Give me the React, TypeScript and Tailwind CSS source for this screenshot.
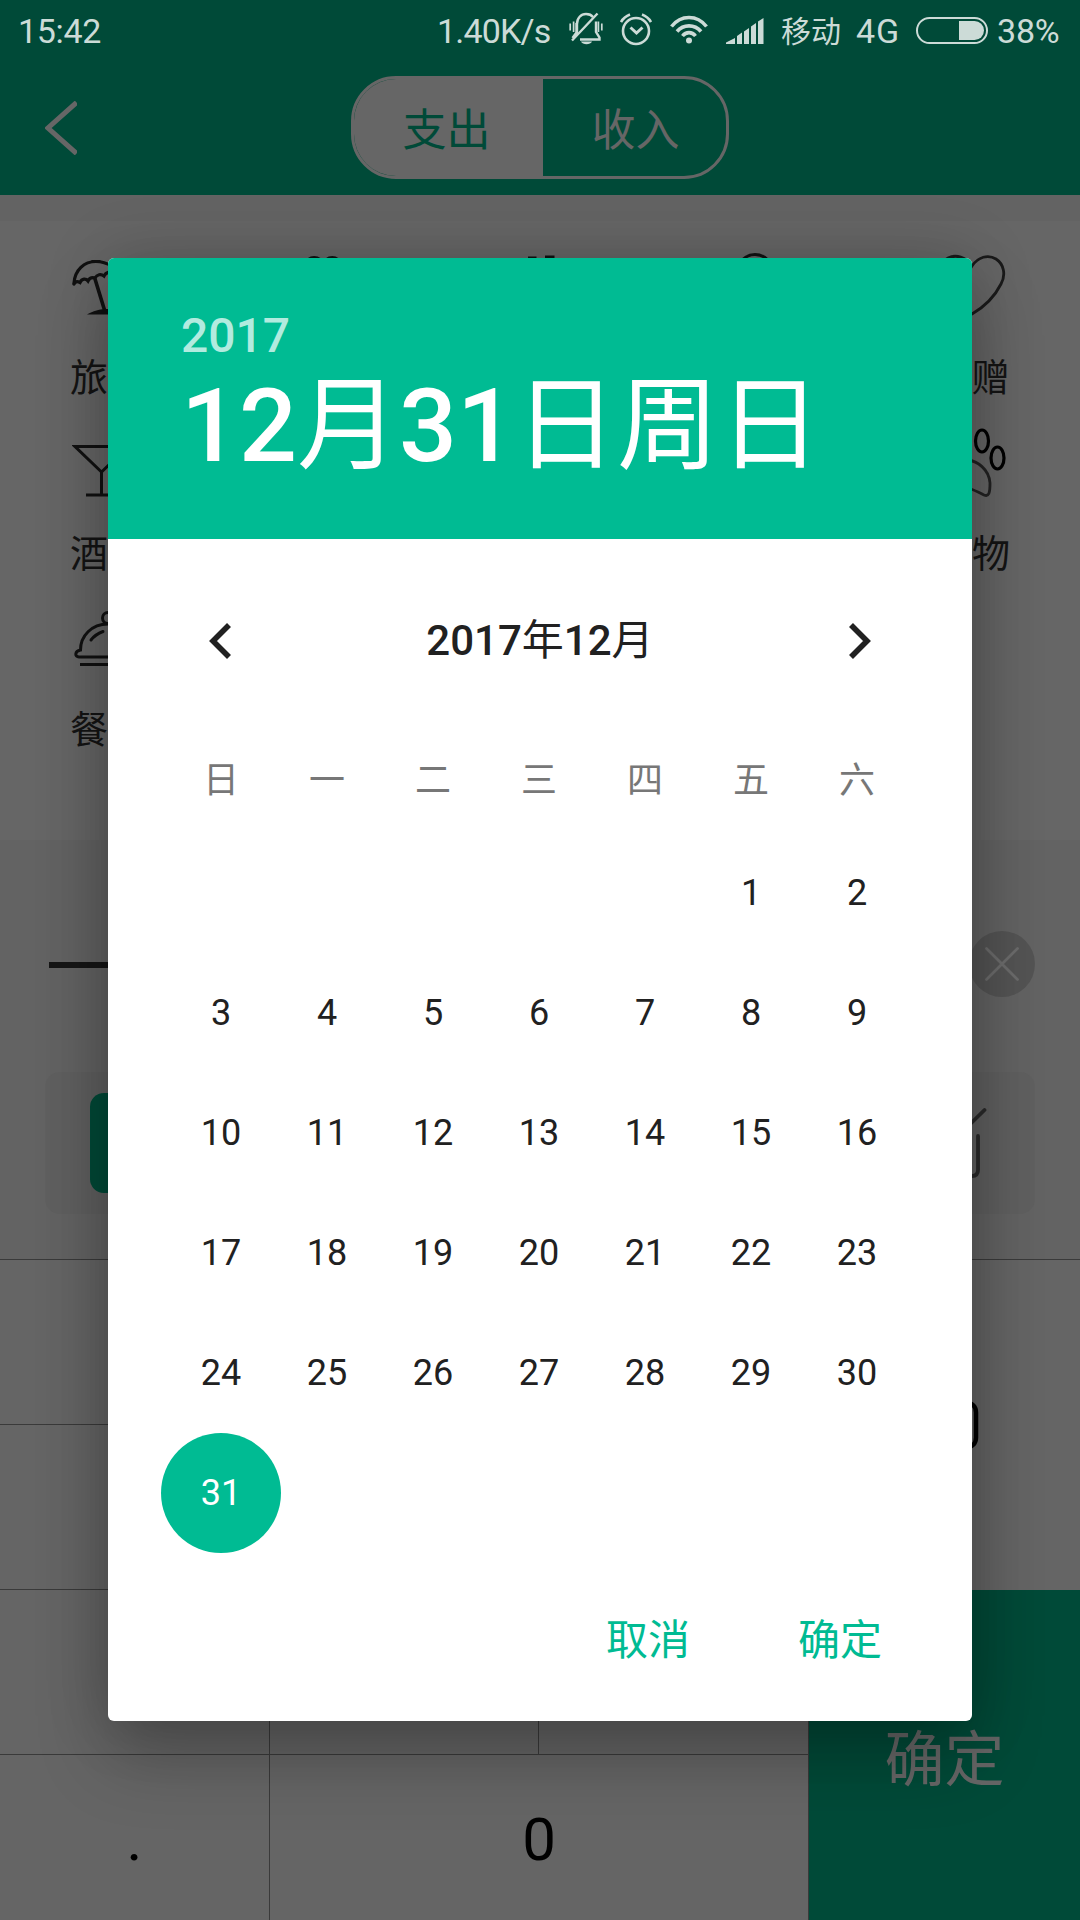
import React from 'react';

const WEEKDAYS = ['日', '一', '二', '三', '四', '五', '六'];
const LEADING_BLANKS = 5;
const DAYS = Array.from({ length: 31 }, (_, i) => i + 1);
const SELECTED = 31;

function StatusBar() {
  return (
    <div className="flex h-[62px] items-center pl-[18px] text-[34px] leading-none text-[#ccdbd7]">
      <span className="w-[419px] tracking-[-0.3px]">15:42</span>
      <span className="w-[132px] tracking-[-0.8px]">1.40K/s</span>
      <svg width="34" height="34" viewBox="0 0 34 34" fill="none" stroke="#ccdbd7" strokeWidth="2.4" className="mr-[17px] -mt-1">
        <path d="M8 23V12C8 6 12 2 17 2c3 0 5.500 1 7 3M27 9.500V20l3.500 5.500v2H11" />
        <path d="M7.500 11v9.500L3.500 26M3 28.500 28.500 1.500" />
        <path d="M1.200 11.500v7M4.600 9.500v10.500M29.400 9.500v10.500M32.800 11.500v7" strokeWidth="1.700" />
        <path d="M12 29.500h11c-1.500 3.500-9.500 3.500-11 0z" fill="#ccdbd7" stroke="none" />
      </svg>
      <svg width="32" height="34" viewBox="0 0 32 34" fill="none" stroke="#ccdbd7" strokeWidth="2.600" className="mr-[18px] -mt-1">
        <circle cx="16" cy="19" r="13" />
        <path d="M1 10C3 6.500 6 4 10 2.500M31 10C29 6.500 26 4 22 2.500" />
        <path d="m10.500 15.500 6 5.500 6-5.500" strokeWidth="3" />
      </svg>
      <svg width="38" height="30" viewBox="0 0 38 30" fill="none" stroke="#ccdbd7" strokeWidth="3.600" className="mr-[18px] -mt-[3px]">
        <path d="M1.500 11.500C11-.5 27-.5 36.500 11.500" />
        <path d="M7 16.500c6.500-7.500 17.500-7.500 24 0" />
        <path d="M12.500 21c3.500-4.500 9.500-4.500 13 0" />
        <circle cx="19" cy="25.500" r="3" fill="#ccdbd7" stroke="none" />
      </svg>
      <svg width="38" height="26" viewBox="0 0 38 26" fill="#ccdbd7" className="mr-[17px]">
        <path d="M0 26v-1.500L9 20v6zM11 26V18l5-3.500V26zM18 26V13.500l5-3.500V26zM25 26V8.500l5-3.500V26zM32 26V3.500L37.500 0v26z" />
      </svg>
      <span className="w-[74px] pt-[2px] text-[30px]">移动</span>
      <span className="w-[61px] pl-px tracking-[1px]">4G</span>
      <div className="flex h-[27px] w-[72px] shrink-0 -translate-y-px justify-end rounded-full border-2 border-[#ccdbd7] p-[2px]">
        <div className="w-[25px] rounded-r-full bg-[#ccdbd7]" />
      </div>
      <span className="ml-[9px] tracking-[-0.2px]">38%</span>
    </div>
  );
}

function Header() {
  return (
    <header className="h-[195px] bg-[#004a38]">
      <StatusBar />
      <div className="flex items-start pt-[14px]">
        <svg width="32" height="54" viewBox="0 0 32 54" fill="none" stroke="#666666" strokeWidth="5" className="ml-[45px] mt-[25px]">
          <path d="M31.500 1.500 3 27l28.500 25.500" />
        </svg>
        <div className="ml-[274px] flex h-[103px] w-[378px] overflow-hidden rounded-[45px] border-[3px] border-[#666666] text-[44px]">
          <div className="flex w-[189px] items-center justify-center bg-[#666666] pr-[4px] pt-[6px] text-[#004a38]">支出</div>
          <div className="flex flex-1 items-center justify-center pl-[2px] pt-[6px] text-[#666666]">收入</div>
        </div>
      </div>
    </header>
  );
}

function Categories() {
  return (
    <section className="flex h-[619px] flex-col bg-[#666666] pt-[24px] text-[38px] leading-[48px] text-[#141414]">
      <div className="grid h-[176px] grid-cols-5">
        <div className="flex flex-col items-center">
          <svg width="72" height="72" viewBox="0 0 72 72" fill="none" stroke="#111" strokeWidth="3.200" strokeLinecap="round" className="mt-[6px] h-[72px]">
            <path d="M2 32C3 19 12 10.500 24 10.500c12 0 22 8 25 14M20 10.500h8" />
            <path d="M2 33c2-4 5-2 6-1.500 2-4.500 6-4 8-1.500 2-4 5-3.500 7-3 2-3.500 6-4.500 9-2 2-4 6-5 9-2" />
            <path d="m23 28 9.500 31" strokeWidth="3.600" />
            <path d="M15 63.500c6-3.500 12-5.500 22-5.500v5.500z" fill="#111" stroke="none" />
          </svg>
          <span className="mt-[31px] w-[76px]">旅</span>
        </div>
        <div className="flex flex-col items-center">
          <svg width="72" height="72" viewBox="0 0 72 72" fill="none" stroke="#111" strokeWidth="2.800" className="mt-[6px]">
            <path d="M17 14c2-10 16-10 19 0M35 14c3-10 16-10 18 0" />
          </svg>
        </div>
        <div className="flex flex-col items-center">
          <svg width="72" height="72" viewBox="0 0 72 72" fill="none" stroke="#111" strokeWidth="3" className="mt-[6px]">
            <path d="M25.500 14V7h5.500V14M42.500 14V6h6.500V14" />
          </svg>
        </div>
        <div className="flex flex-col items-center">
          <svg width="72" height="72" viewBox="0 0 72 72" fill="none" stroke="#111" strokeWidth="2.800" className="mt-[6px]">
            <circle cx="35" cy="21.500" r="18" />
          </svg>
        </div>
        <div className="flex flex-col items-center">
          <svg width="72" height="72" viewBox="0 0 72 72" fill="none" stroke="#1a1a1a" strokeWidth="2.800" className="mt-[6px]">
            <path d="M36 15C42 6 52 3 60 8c8 5 10 16 5 25-6 12-17 23-29 30C24 56 12 45 6 33 1 24 4 11 12 7c8-4 18-1 24 8z" />
          </svg>
          <span className="mt-[31px] w-[75px] text-right">赠</span>
        </div>
      </div>
      <div className="flex h-[176px] justify-between px-[72px]">
        <div className="flex w-[72px] flex-col">
          <svg width="72" height="72" viewBox="0 0 72 72" fill="none" stroke="#111" strokeWidth="3" className="mt-[6px]">
            <path d="M3 19.500h53L29.500 45zM29.500 45v23M14 68h31" />
          </svg>
          <span className="-ml-[2px] mt-[31px]">酒</span>
        </div>
        <div className="flex w-[72px] flex-col items-end">
          <svg width="72" height="72" viewBox="0 0 72 72" fill="none" stroke="#000" strokeWidth="3.200" className="mt-[6px]">
            <ellipse cx="46" cy="14" rx="6.500" ry="11" />
            <ellipse cx="61.500" cy="31" rx="6.500" ry="11" />
            <path d="M32 33c9 1 21 9 22 23 0 10-1 14-6 12-4-2-9-5-14-6" stroke="#222" strokeWidth="2.800" />
          </svg>
          <span className="-mr-[2px] mt-[31px]">物</span>
        </div>
      </div>
      <div className="flex h-[176px] flex-col px-[70px]">
        <svg width="72" height="72" viewBox="0 0 72 72" fill="none" stroke="#111" strokeWidth="3" className="mt-[6px]">
          <circle cx="38" cy="15" r="5.500" />
          <path d="M10.500 47c0-14 11-26 27.500-26s28 12 28 26c6 2 4 7 0 7H9c-4.500 0-4.500-6 1.500-7zM10 61.500h56" />
          <path d="M21 37c3-4 8-7 12-8.500" strokeLinecap="round" />
        </svg>
        <span className="mt-[31px]">餐</span>
      </div>
    </section>
  );
}

function AmountPanel() {
  return (
    <section className="flex h-[419px] flex-col bg-[#636363]">
      <div className="flex h-[232px] items-center pl-[49px] pr-[45px] pt-[18px]">
        <div className="mr-auto h-[6px] w-[120px] bg-[#161616]" />
        <div className="flex h-[66px] w-[66px] -translate-y-px items-center justify-center rounded-full bg-[#545454]">
          <svg width="34" height="34" viewBox="0 0 34 34" stroke="#6c6c6c" strokeWidth="2.800" strokeLinecap="round">
            <path d="m1.500 1.500 31 31M32.500 1.500l-31 31" />
          </svg>
        </div>
      </div>
      <div className="mx-[45px] flex h-[142px] items-center justify-between rounded-[15px] bg-[#606060] px-[45px]">
        <div className="h-[100px] w-[120px] rounded-[14px] bg-[#004a38]" />
        <svg width="70" height="80" viewBox="0 0 70 80" fill="none" stroke="#2a2a2a" strokeWidth="3.800" strokeLinecap="round" className="mr-[3px]">
          <path d="M36 38 67.500 7M61 33v34c0 4-2 6-6 6H8" />
        </svg>
      </div>
    </section>
  );
}

function Keypad() {
  return (
    <section className="flex h-[661px] border-t border-[#3a3a3a] bg-[#656565] text-[60px] leading-none text-black">
      <div className="grid w-[809px] grid-cols-[270px_269px_270px] grid-rows-[165px_165px_165px_165px]">
        {Array.from({ length: 9 }, (_, i) => (
          <div key={i} className="border-b border-r border-[#3a3a3a]" />
        ))}
        <div className="flex items-center justify-center border-r border-[#3a3a3a] pt-[5px]">.</div>
        <div className="col-span-2 flex items-center justify-center border-r border-[#3a3a3a] pt-[5px]">0</div>
      </div>
      <div className="flex flex-1 flex-col">
        <div className="flex h-[330px] items-center justify-center">
          <svg width="90" height="50" viewBox="0 0 90 50" fill="none" stroke="#000" strokeWidth="4.500" className="mr-[22px]">
            <path d="M22 2.500h55c6 0 10 4 10 10v25c0 6-4 10-10 10H22L3 25z" />
          </svg>
        </div>
        <div className="flex flex-1 items-center justify-center bg-[#004a38] pt-[11px] text-[#666666]">
          <span className="text-[60px]">确定</span>
        </div>
      </div>
    </section>
  );
}

function DateDialog() {
  return (
    <div className="absolute left-[108px] top-[258px] flex h-[1463px] w-[864px] flex-col overflow-hidden rounded-[6px] bg-white shadow-[0_36px_72px_rgba(0,0,0,0.24),0_0_64px_rgba(0,0,0,0.18)]">
      <div className="flex h-[281px] flex-col bg-[#00bb93] pl-[73px] pt-[49px] text-white">
        <span className="text-[48px] font-medium leading-[58px] text-[#b2ebdf]">2017</span>
        <span className="mt-px whitespace-nowrap text-[102px] leading-[120px]">
          <b className="font-medium">12</b>月<b className="font-medium">31</b>日周日
        </span>
      </div>
      <div className="flex h-[204px] items-center justify-between px-[101px] text-[42px] text-[#212121]">
        <svg width="22" height="36" viewBox="0 0 22 36" fill="none" stroke="#212121" strokeWidth="5.600">
          <path d="M20 2 4 18l16 16" />
        </svg>
        <span className="leading-none">
          <b className="font-medium">2017</b>年<b className="font-medium">12</b>月
        </span>
        <svg width="22" height="36" viewBox="0 0 22 36" fill="none" stroke="#212121" strokeWidth="5.600">
          <path d="m2 2 16 16L2 34" />
        </svg>
      </div>
      <div className="ml-[60px] grid w-[742px] grid-cols-7 text-center text-[36px] text-[#212121]">
        {WEEKDAYS.map((d) => (
          <div key={d} className="flex h-[90px] items-center justify-center pb-[14px] text-[#777777]">{d}</div>
        ))}
        {Array.from({ length: LEADING_BLANKS }, (_, i) => (
          <div key={'b' + i} className="h-[120px]" />
        ))}
        {DAYS.map((d) => (
          <div key={d} className="flex h-[120px] items-center justify-center">
            {d === SELECTED ? (
              <span className="flex h-[120px] w-[120px] shrink-0 items-center justify-center rounded-full bg-[#00bb93] text-white">{d}</span>
            ) : (
              d
            )}
          </div>
        ))}
      </div>
      <div className="mt-[55px] flex justify-end gap-[108px] pr-[90px] text-[42px] leading-[66px] text-[#00bb93]">
        <span>取消</span>
        <span>确定</span>
      </div>
    </div>
  );
}

export default function App() {
  return (
    <div className="relative h-[1920px] w-[1080px] overflow-hidden bg-[#666666] font-['Roboto','Noto_Sans_CJK_SC',sans-serif]">
      <Header />
      <div className="h-[26px] bg-[#636363]" />
      <Categories />
      <AmountPanel />
      <Keypad />
      <DateDialog />
    </div>
  );
}
